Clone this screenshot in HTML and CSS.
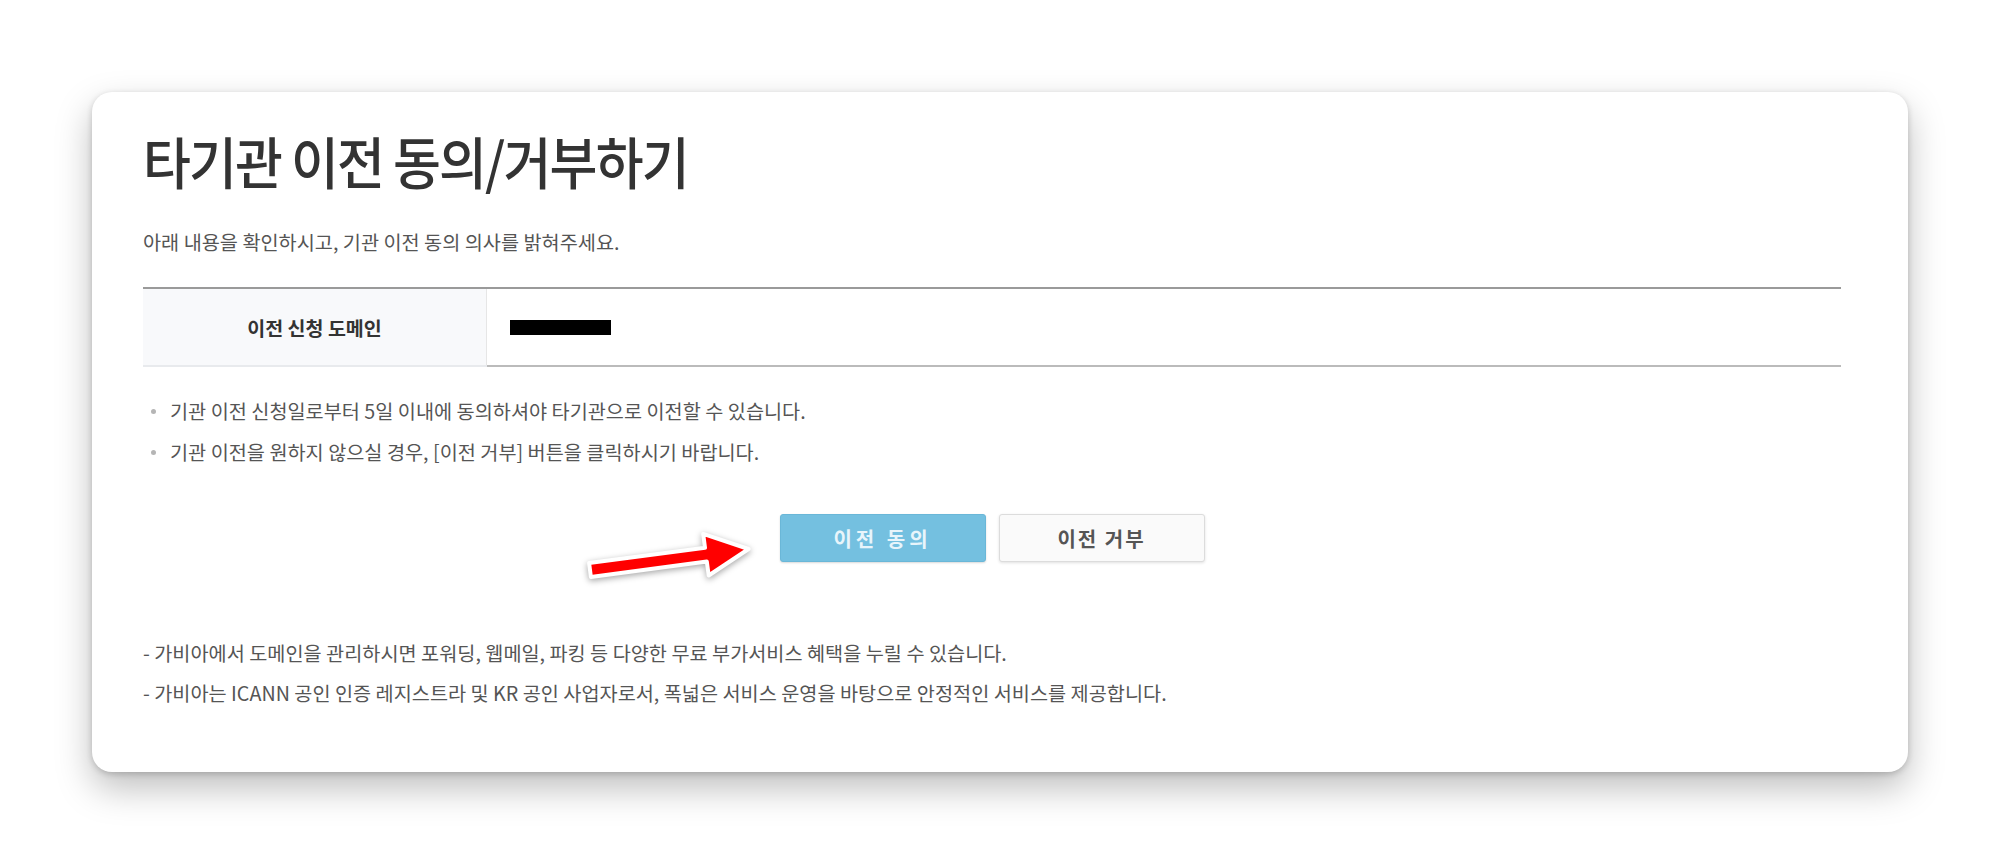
FILE: index.html
```html
<!DOCTYPE html>
<html>
  <head>
    <meta charset="utf-8" />
    <title>타기관 이전 동의/거부하기</title>
    <link rel="stylesheet" href="styles.css">
  </head>
  <body>
    <div class="card">
      <h1 class="title"><span>타기관 이전 동의/거부하기</span></h1>
      <p class="lead">아래 내용을 확인하시고, 기관 이전 동의 의사를 밝혀주세요.</p>

      <table class="info-table">
        <tr>
          <th>이전 신청 도메인</th>
          <td><span class="masked"></span></td>
        </tr>
      </table>

      <ul class="notice">
        <li>기관 이전 신청일로부터 5일 이내에 동의하셔야 타기관으로 이전할 수 있습니다.</li>
        <li>기관 이전을 원하지 않으실 경우, [이전 거부] 버튼을 클릭하시기 바랍니다.</li>
      </ul>

      <div class="actions">
        <span class="agree-wrap">
          <svg class="pointer" width="190" height="75" viewBox="0 0 190 75">
            <polygon points="13.1,43.1 129,27.8 127.2,13.9 172.6,29 132.7,55.5 130.8,41.6 14.9,56.9" />
          </svg>
          <button class="btn btn-agree">이전 동의</button>
        </span>
        <button class="btn btn-refuse">이전 거부</button>
      </div>

      <div class="footnote">
        <p>- 가비아에서 도메인을 관리하시면 포워딩, 웹메일, 파킹 등 다양한 무료 부가서비스 혜택을 누릴 수 있습니다.</p>
        <p>- 가비아는 ICANN 공인 인증 레지스트라 및 KR 공인 사업자로서, 폭넓은 서비스 운영을 바탕으로 안정적인 서비스를 제공합니다.</p>
      </div>
    </div>
  </body>
</html>
```

FILE: styles.css
```css
html {
  background: #FFFFFF;
}
body {
  margin: 0;
  padding: 92px 92px 88px 92px;
  background: #FFFFFF;
  font-family: "Noto Sans CJK KR", "Noto Sans", sans-serif;
  color: #555;
}
.card {
  background: #FFFFFF;
  border-radius: 20px;
  padding: 38px 67px 67px 51px;
  box-shadow: 0 16px 36px rgba(0,0,0,0.26), 0 2px 6px rgba(0,0,0,0.18);
}
.title {
  margin: 0;
  height: 60px;
  line-height: 60px;
  font-size: 56px;
  font-weight: 500;
  color: #333;
  white-space: nowrap;
}
.title span {
  display: inline-block;
  letter-spacing: -2px;
  transform: scaleX(0.93);
  transform-origin: left center;
}
.lead {
  margin: 40px 0 0 0;
  font-size: 19.7px;
  line-height: 24px;
  color: #555;
}
/* domain table */
.info-table {
  width: 100%;
  margin-top: 33px;
  border-collapse: collapse;
  border-top: 2px solid #9a9a9a;
}
.info-table th,
.info-table td {
  height: 76px;
  padding: 0;
}
.info-table th {
  width: 343px;
  background: #F8F9FB;
  border-right: 1px solid #E6E6E6;
  border-bottom: 2px solid #E8EAED;
  font-size: 19.5px;
  font-weight: bold;
  color: #333;
}
.info-table td {
  padding-left: 23px;
  border-bottom: 2px solid #BBBBBB;
}
.masked {
  display: block;
  width: 101px;
  height: 15px;
  background: #000;
}
.notice {
  list-style: none;
  margin: 32px 0 0 0;
  padding: 0;
}
.notice li {
  position: relative;
  padding-left: 27px;
  font-size: 19.7px;
  line-height: 24px;
  color: #555;
}
.notice li + li {
  margin-top: 17px;
}
.notice li:before {
  content: "";
  position: absolute;
  left: 8px;
  top: 10px;
  width: 5px;
  height: 5px;
  border-radius: 50%;
  background: #B5B5B5;
}
/* buttons */
.actions {
  display: flex;
  justify-content: center;
  gap: 13px;
  margin-top: 50px;
}
.agree-wrap {
  position: relative;
  display: flex;
}
.pointer {
  position: absolute;
  right: calc(100% + 14px);
  top: 6px;
  overflow: visible;
  filter: drop-shadow(0 2px 3px rgba(0,0,0,0.35));
}
.pointer polygon {
  fill: #FF0000;
  stroke: #FFFFFF;
  stroke-width: 4;
  stroke-linejoin: round;
}
.btn {
  width: 206px;
  height: 48px;
  border-radius: 3px;
  font-family: inherit;
  font-size: 20px;
  font-weight: bold;
  letter-spacing: 4px;
  cursor: pointer;
}
.btn-agree {
  background: #74C0E0;
  border: 1px solid #6AB7D8;
  color: #E8F5FB;
  box-shadow: 0 1px 2px rgba(0,0,0,0.15);
}
.btn-refuse {
  background: #FAFAFA;
  border: 1px solid #DCDCDC;
  color: #555;
  letter-spacing: 2px;
  box-shadow: 0 1px 3px rgba(0,0,0,0.12);
}
.footnote {
  margin-top: 79px;
}
.footnote p {
  margin: 0;
  font-size: 19.7px;
  line-height: 24px;
  color: #555;
}
.footnote p + p {
  margin-top: 16px;
}
```
